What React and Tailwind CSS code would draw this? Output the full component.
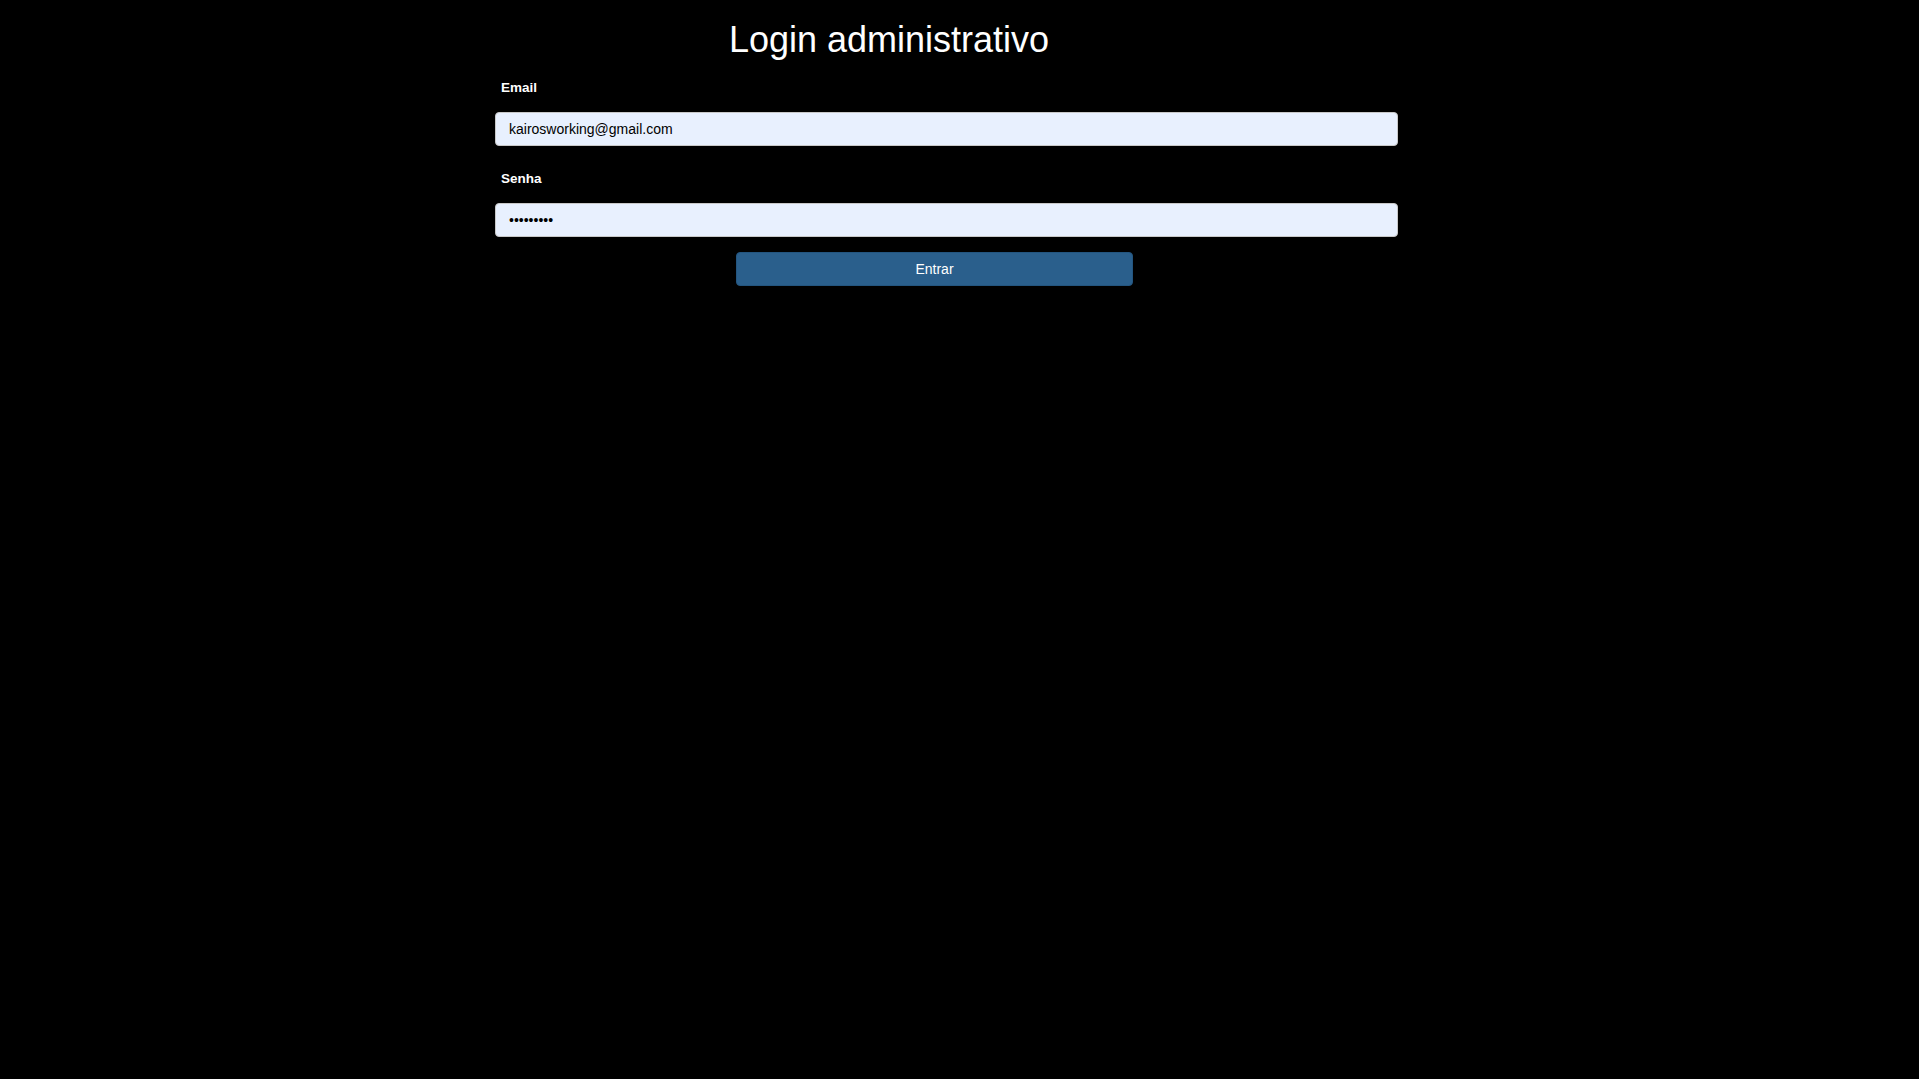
import { useState } from "react";

export default function App() {
  const [email, setEmail] = useState("kairosworking@gmail.com");
  const [senha, setSenha] = useState("123456789");

  return (
    <div className="min-h-screen w-full bg-black text-white font-['Liberation_Sans',Arial,sans-serif]">
      <form onSubmit={e => e.preventDefault()} className="ml-[495px] w-[903px] flex flex-col pt-[19px]">
        {/* Title */}
        <h1 className="pr-[115px] text-center text-[36px] leading-[41px] font-normal">
          Login administrativo
        </h1>

        <label className="mt-[20px] pl-[6px] text-[13.5px] leading-[15px] font-bold">Email</label>
        <input value={email} onChange={e => setEmail(e.target.value)}
          className="mt-[17px] h-[34px] w-full rounded-[4px] border border-[#c8c8c8] bg-[#e8f0fe] px-[13px] text-[14px] text-black outline-none" />

        <label className="mt-[25px] pl-[6px] text-[13.5px] leading-[15px] font-bold">Senha</label>
        <input type="password" value={senha} onChange={e => setSenha(e.target.value)}
          className="mt-[17px] h-[34px] w-full rounded-[4px] border border-[#c8c8c8] bg-[#e8f0fe] px-[13px] text-[14px] text-black outline-none" />

        <button type="submit"
          className="mt-[15px] ml-[241px] h-[34px] w-[397px] rounded-[4px] border border-[#23557f] bg-[#2a5f8c] text-[14px] text-white">
          Entrar
        </button>
      </form>
    </div>
  );
}
